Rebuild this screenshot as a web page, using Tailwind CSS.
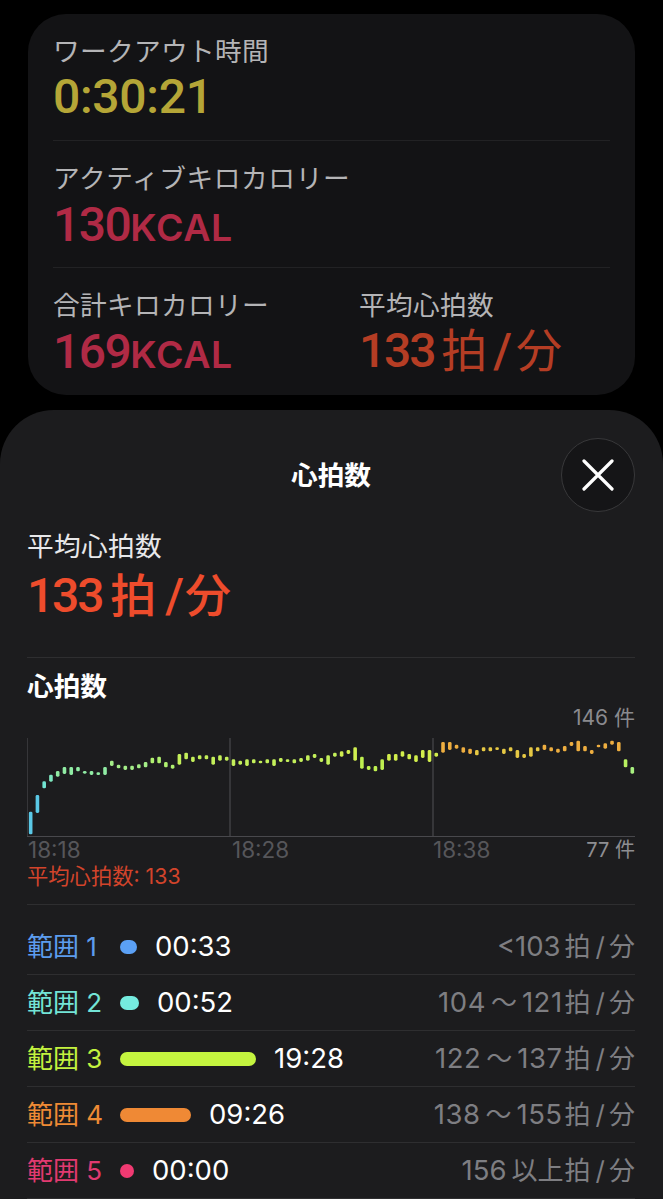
<!DOCTYPE html>
<html lang="ja"><head><meta charset="utf-8">
<script src="https://cdn.jsdelivr.net/npm/@tailwindcss/browser@4"></script>
</head>
<body class="bg-black">
<div class="w-[663px] h-[1199px] overflow-hidden bg-black pt-[14px] font-['Inter','Noto_Sans_CJK_JP',sans-serif]">
  <section class="mx-[28px] h-[381px] rounded-[38px] bg-[#131315] px-[25px] text-[#b4b4b6]">
    <div class="h-[127px] border-b border-[#222224] pt-[19px]">
      <div class="text-[26.7px] leading-[36px] tracking-[0.3px]">ワークアウト時間</div>
      <div class="mt-[1px] font-['Roboto',sans-serif] text-[48px] font-medium leading-[54px] tracking-[-0.3px] text-[#b5a637]">0:30:21</div>
    </div>
    <div class="h-[127px] border-b border-[#222224] pt-[19px]">
      <div class="text-[26.7px] leading-[36px] tracking-[0.6px]">アクティブキロカロリー</div>
      <div class="mt-[2px] flex items-baseline font-['Roboto',sans-serif] text-[48px] font-medium leading-[54px] tracking-[-1.5px] text-[#b02a45]">130<span class="font-['Inter',sans-serif] text-[37.5px] font-semibold tracking-[0.6px]">KCAL</span></div>
    </div>
    <div class="flex pt-[19px]">
      <div class="w-[306px]">
        <div class="text-[26.7px] leading-[36px] tracking-[0.3px]">合計キロカロリー</div>
        <div class="mt-[2px] flex items-baseline font-['Roboto',sans-serif] text-[48px] font-medium leading-[54px] tracking-[-1.5px] text-[#b02a45]">169<span class="font-['Inter',sans-serif] text-[37.5px] font-semibold tracking-[0.6px]">KCAL</span></div>
      </div>
      <div>
        <div class="text-[26.7px] leading-[36px] tracking-[0.3px]">平均心拍数</div>
        <div class="mt-[1px] flex items-baseline font-['Roboto','Noto_Sans_CJK_JP',sans-serif] text-[48px] font-medium leading-[54px] tracking-[-2.2px] text-[#b53d24]">133<span class="ml-[7px] text-[46px] font-normal tracking-normal">拍</span><span class="ml-[6px] tracking-normal">/</span><span class="ml-[4px] text-[46px] font-normal tracking-normal">分</span></div>
      </div>
    </div>
  </section>

  <section class="mt-[15px] h-[800px] rounded-t-[54px] bg-[#1c1c1e] pl-[27px] pr-[28px]">
    <div class="relative h-[118px] pt-[46px] text-center text-[26.7px] font-bold leading-[38px] text-white">心拍数
      <button class="absolute right-0 top-[28px] flex h-[74px] w-[74px] items-center justify-center rounded-full border border-[#38383a] bg-[#151517]">
        <svg width="32" height="32" viewBox="0 0 32 32" fill="none" stroke="#fff" stroke-width="3.2" stroke-linecap="round"><path d="M2 2 L30 30 M30 2 L2 30"/></svg>
      </button>
    </div>
    <div class="text-[26.7px] leading-[36px] tracking-[0.3px] text-[#e8e8ea]">平均心拍数</div>
    <div class="mt-[5px] flex h-[89px] items-baseline border-b border-[#2e2e30] font-['Roboto','Noto_Sans_CJK_JP',sans-serif] text-[48px] font-medium leading-[54px] tracking-[-2.2px] text-[#ee4c2c]">133<span class="ml-[8px] text-[46px] tracking-normal">拍</span><span class="ml-[9px] tracking-normal">/</span><span class="ml-[1px] text-[46px] tracking-normal">分</span></div>
    <div class="mt-[10px] text-[26.7px] font-bold leading-[36px] text-white">心拍数</div>
    <div class="mt-[1px] text-right text-[21px] leading-[26px] text-[#8a8a8e]">146 件</div>
    <svg id="chart" class="mt-[7px] block" width="609" height="100" viewBox="27 737 609 100"></svg>
    <div class="flex h-[24px] items-center pl-[1px] text-[22.5px] text-[#56565a]">
      <span class="w-[204px]">18:18</span><span class="w-[201px]">18:28</span><span>18:38</span><span class="ml-auto text-[20px] text-[#8e8e92]">77 件</span>
    </div>
    <div class="h-[43px] border-b border-[#2e2e30] text-[21.3px] leading-[28px] text-[#d2442b]">平均心拍数: 133</div>

    <div class="flex h-[70px] items-center border-b border-[#2e2e30] pt-[14px] text-[26px]">
      <span class="w-[93px] text-[#5c9cee]">範囲 1</span>
      <span class="mr-[18px] h-[14px] w-[17px] rounded-full bg-[#5ba0f5]"></span>
      <span class="text-[27.5px] text-white">00:33</span>
      <span class="ml-auto flex items-baseline text-[#7e7e82]"><span class="text-[27.5px]">&lt;103</span><span class="ml-[4px]">拍</span><span class="ml-[5px]">/</span><span class="ml-[4px]">分</span></span>
    </div>
    <div class="flex h-[56px] items-center border-b border-[#2e2e30] text-[26px]">
      <span class="w-[93px] text-[#73e4d6]">範囲 2</span>
      <span class="mr-[18px] h-[14px] w-[19px] rounded-full bg-[#75ebdf]"></span>
      <span class="text-[27.5px] text-white">00:52</span>
      <span class="ml-auto flex items-baseline text-[#7e7e82]"><span class="text-[27.5px] tracking-[0.5px]">104</span><span class="mx-[5px]">〜</span><span class="text-[27.5px] tracking-[0.5px]">121</span><span class="ml-[2px]">拍</span><span class="ml-[5px]">/</span><span class="ml-[4px]">分</span></span>
    </div>
    <div class="flex h-[56px] items-center border-b border-[#2e2e30] text-[26px]">
      <span class="w-[93px] text-[#c3f23f]">範囲 3</span>
      <span class="mr-[18px] h-[14px] w-[136px] rounded-full bg-[#c4f43f]"></span>
      <span class="text-[27.5px] text-white">19:28</span>
      <span class="ml-auto flex items-baseline text-[#7e7e82]"><span class="text-[27.5px] tracking-[0.5px]">122</span><span class="mx-[5px]">〜</span><span class="text-[27.5px] tracking-[0.5px]">137</span><span class="ml-[2px]">拍</span><span class="ml-[5px]">/</span><span class="ml-[4px]">分</span></span>
    </div>
    <div class="flex h-[56px] items-center border-b border-[#2e2e30] text-[26px]">
      <span class="w-[93px] text-[#ee8a35]">範囲 4</span>
      <span class="mr-[18px] h-[14px] w-[71px] rounded-full bg-[#ef8935]"></span>
      <span class="text-[27.5px] text-white">09:26</span>
      <span class="ml-auto flex items-baseline text-[#7e7e82]"><span class="text-[27.5px] tracking-[0.5px]">138</span><span class="mx-[5px]">〜</span><span class="text-[27.5px] tracking-[0.5px]">155</span><span class="ml-[2px]">拍</span><span class="ml-[5px]">/</span><span class="ml-[4px]">分</span></span>
    </div>
    <div class="flex h-[56px] items-center border-b border-[#2e2e30] text-[26px]">
      <span class="w-[93px] text-[#e13a70]">範囲 5</span>
      <span class="mr-[18px] h-[14px] w-[14px] rounded-full bg-[#f03a72]"></span>
      <span class="text-[27.5px] text-white">00:00</span>
      <span class="ml-auto flex items-baseline text-[#7e7e82]"><span class="text-[27.5px]">156</span><span class="ml-[5px]">以上</span><span class="ml-[1px]">拍</span><span class="ml-[5px]">/</span><span class="ml-[4px]">分</span></span>
    </div>
  </section>
</div>
<script>
var d=[[332,400],[282,336],[241,262],[221,242],[210,227],[198,219],[198,222],[198,211],[210,218],[210,222],[214,222],[198,222],[179,195],[191,202],[194,207],[194,207],[190,202],[183,199],[170,187],[167,187],[183,199],[191,203],[159,191],[155,175],[167,183],[163,175],[163,175],[167,191],[163,179],[167,179],[175,195],[179,191],[175,195],[175,187],[179,187],[175,187],[175,195],[171,183],[175,183],[175,187],[171,183],[163,179],[159,171],[171,183],[163,191],[155,167],[151,167],[147,159],[139,179],[167,203],[195,207],[195,211],[175,207],[159,179],[159,179],[151,167],[159,175],[163,183],[147,171],[147,183],[155,167],[123,155],[123,147],[131,143],[139,155],[143,159],[147,163],[139,151],[139,151],[139,147],[143,159],[139,151],[147,171],[159,171],[139,167],[139,151],[131,147],[139,151],[143,155],[135,151],[123,135],[119,151],[135,151],[147,159],[131,139],[127,143],[119,131],[123,151],[175,199],[198,218]];
function col(i){if(i<2)return'#5ac8e6';if(i==2)return'#72e4d2';if(i==3)return'#7ee8c0';if(i<12)return'#90eca4';if(i<18)return'#a4ee88';if(i<22)return'#b0f070';if(i<46)return'#c4f05a';if(i<49)return'#d0ee50';if(i<53)return'#bff050';if(i<61)return'#d2ee4c';if(i==88)return'#b8f060';if(i==89)return'#a8f080';if(i>=66&&i<=75)return'#e6c844';return'#eeae40';}
var s='<path d="M27 737V836M230 737V836M433 737V836M27 835.5H635" stroke="#48484c" stroke-width="1.2" fill="none"/>';
d.forEach(function(b,i){var x=30.67+i*6.76,y=700+b[0]/3,h=(b[1]-b[0])/3;s+='<rect x="'+(x-1.8).toFixed(2)+'" y="'+y.toFixed(2)+'" width="3.6" height="'+h.toFixed(2)+'" rx="1.4" fill="'+col(i)+'"/>';});
document.getElementById('chart').innerHTML=s;
</script>
</body></html>
